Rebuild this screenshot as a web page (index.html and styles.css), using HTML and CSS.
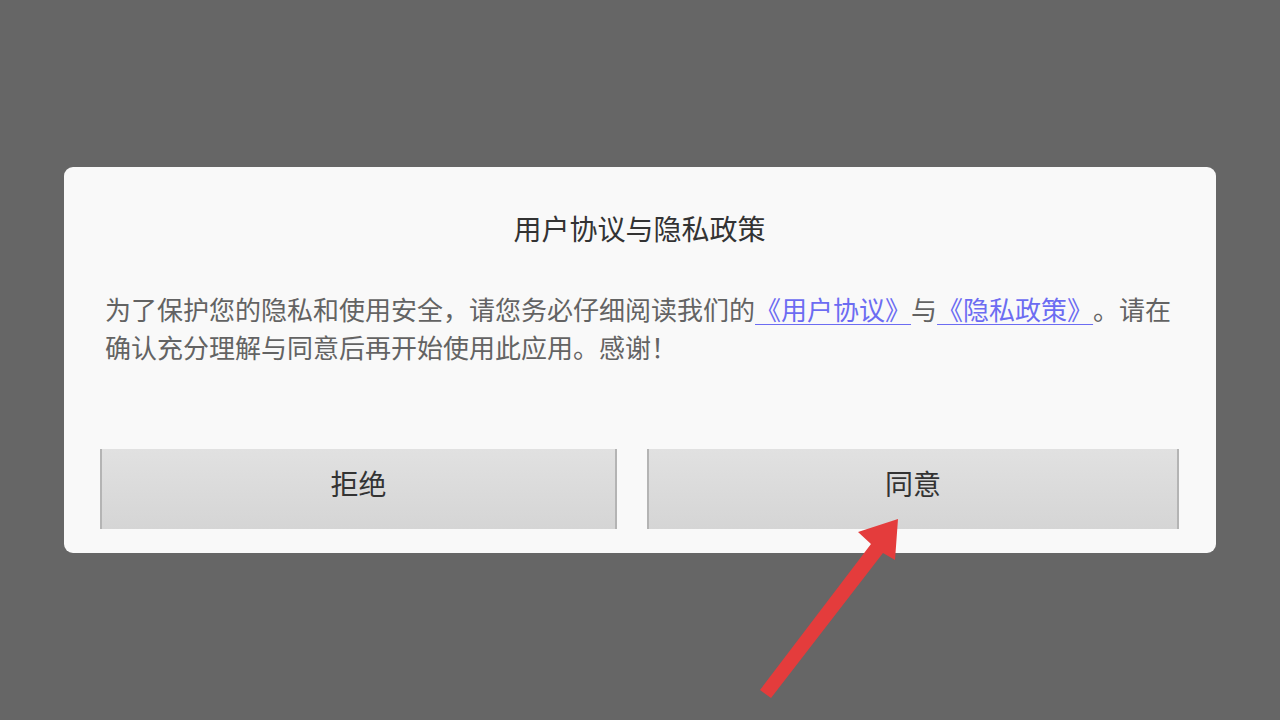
FILE: index.html
```html
<!DOCTYPE html>
<html lang="zh-CN">
<head>
    <meta charset="UTF-8">
    <meta name="viewport" content="width=device-width, initial-scale=1.0">
    <title>用户协议与隐私政策</title>
    <link rel="stylesheet" href="styles.css">
</head>
<body>
    <div class="dialog">
        <h2 class="dialog-title">用户协议与隐私政策</h2>
        <p class="dialog-text">为了保护您的隐私和使用安全，请您务必仔细阅读我们的<a href="#">《用户协议》</a>与<a href="#">《隐私政策》</a>。请在确认充分理解与同意后再开始使用此应用。感谢！</p>
        <div class="actions">
            <button class="btn">拒绝</button>
            <button class="btn">同意</button>
        </div>
    </div>

    <svg class="pointer" width="1280" height="720" viewBox="0 0 1280 720">
        <polygon points="760,690 871,544 858,532 898,519 895,560 883,553 771,698" fill="#e43c3c"/>
    </svg>
</body>
</html>
```

FILE: styles.css
```css
html, body {
    margin: 0;
    height: 100%;
}
body {
    font-family: "Noto Sans CJK SC", "Noto Sans", sans-serif;
    background-color: #666666;
    display: flex;
    align-items: center;
    justify-content: center;
    position: relative;
    overflow: hidden;
    text-spacing-trim: space-all;
}
.dialog {
    width: 1152px;
    box-sizing: border-box;
    background: #f9f9f9;
    border-radius: 9px;
    padding: 40px 37px 24px 36px;
}
.dialog-title {
    margin: 0;
    font-size: 28px;
    font-weight: normal;
    line-height: 42px;
    text-align: center;
    color: #333333;
}
.dialog-text {
    margin: 41px 0 0;
    padding: 0 3px 0 5px;
    font-size: 26px;
    line-height: 38px;
    color: #636363;
}
.dialog-text a {
    color: #6c6cf2;
    text-decoration: underline;
    text-underline-offset: 4px;
    text-decoration-thickness: 1px;
}
.actions {
    display: grid;
    grid-template-columns: 517fr 532fr;
    gap: 30px;
    margin-top: 83px;
}
.btn {
    height: 80px;
    font-family: inherit;
    font-size: 28px;
    color: #333333;
    background: linear-gradient(#e1e1e1, #d5d5d5);
    border: none;
    border-left: 2px solid #b4b4b4;
    border-right: 2px solid #b4b4b4;
    padding: 0 0 12px;
    cursor: pointer;
}
.pointer {
    position: absolute;
    left: 0;
    top: 0;
    pointer-events: none;
}
```
